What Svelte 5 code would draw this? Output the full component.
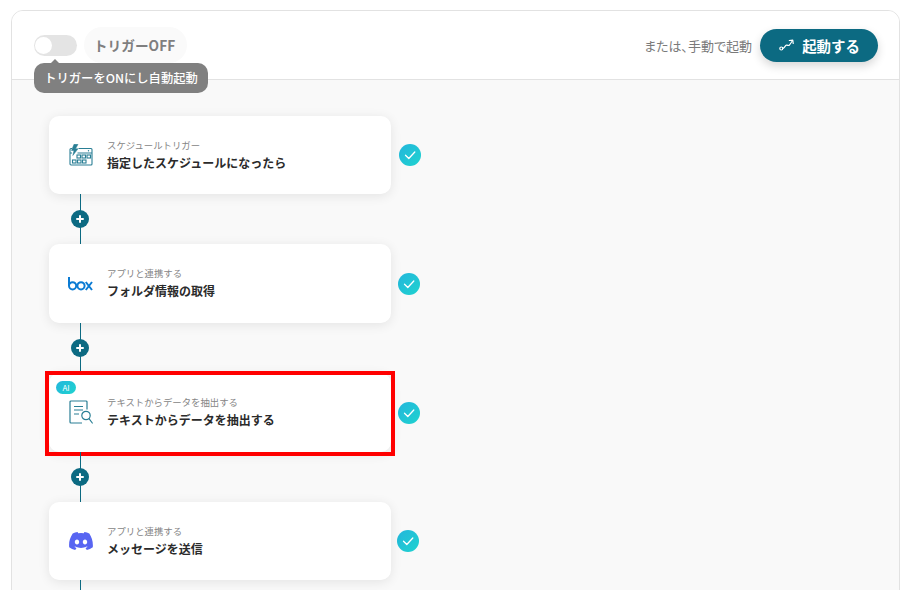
<script lang="ts">
    const steps = [
        { kind: "schedule", label: "スケジュールトリガー", title: "指定したスケジュールになったら", nudge: 8 },
        { kind: "box", label: "アプリと連携する", title: "フォルダ情報の取得", nudge: 7 },
        { kind: "ai", label: "テキストからデータを抽出する", title: "テキストからデータを抽出する", selected: true, nudge: 7 },
        { kind: "discord", label: "アプリと連携する", title: "メッセージを送信", nudge: 6 },
    ];
</script>

<svg class="defs" width="0" height="0">
    <defs>
        <linearGradient id="mint" x1="0" y1="0" x2="1" y2="1">
            <stop offset="0" stop-color="#23b6dc" />
            <stop offset="1" stop-color="#1fd3cf" />
        </linearGradient>
    </defs>
</svg>

<div class="page">
    <div class="panel">
        <header class="bar">
            <div class="switch"><span class="knob"></span></div>
            <span class="state">トリガーOFF</span>
            <span class="tip">トリガーをONにし自動起動</span>
            <span class="hint">または、手動で起動</span>
            <button class="run">
                <svg width="15" height="12" viewBox="0 0 15 12" fill="none" stroke="#fff" stroke-width="1.2" stroke-linecap="round" stroke-linejoin="round">
                    <circle cx="2.300" cy="9.500" r="1.500" />
                    <path d="M4 9.300 C6 9 5.800 6.500 7.500 6.200 C9 6 9.300 7.200 10.500 6 L13.300 2" />
                    <path d="M10.300 1.500 L13.800 1.200 L14.200 4.500" />
                </svg>
                起動する
            </button>
        </header>
        <div class="flow">
            {#each steps as step, i}
                <div class="row">
                    <div class="card" class:selected={step.selected}>
                        {#if step.selected}<span class="ai">AI</span>{/if}
                        <div class="icon">
                            {#if step.kind === "schedule"}
                                <svg width="24" height="22" viewBox="0 0 24 22" fill="none" stroke="#2a7f95" stroke-width="1.100">
                                    <path d="M9.500 4.500 H22 A1 1 0 0 1 23 5.500 V20 A1 1 0 0 1 22 21 H2 A1 1 0 0 1 1 20 V5.500 A1 1 0 0 1 2 4.500 H3" />
                                    <path d="M1 9 H3 M8.500 9 H23" />
                                    <path fill="#2a7f95" stroke="#2a7f95" stroke-width="0.500" stroke-linejoin="round" d="M5 0.300 L2.500 6.500 H5 L3.800 11.500 L9 4.800 H6.500 L9 0.300 Z" />
                                    <circle cx="19.500" cy="6.800" r="0.700" fill="#2a7f95" stroke="none" />
                                    <rect x="8" y="11" width="3.500" height="3" /><rect x="13" y="11" width="3.500" height="3" /><rect x="18" y="11" width="3.500" height="3" />
                                    <rect x="3.500" y="16" width="3.500" height="3" /><rect x="8.500" y="16" width="3.500" height="3" /><rect x="13.500" y="16" width="3.500" height="3" />
                                </svg>
                            {:else if step.kind === "box"}
                                <svg width="25" height="14" viewBox="0 0 25 14" fill="none" stroke="#0b7bd3" stroke-width="2">
                                    <path d="M1 0 V8.800" /><circle cx="4.600" cy="8.800" r="3.600" /><circle cx="13" cy="8.800" r="3.600" />
                                    <path d="M17.800 5 L24 13 M24 5 L17.800 13" />
                                </svg>
                            {:else if step.kind === "ai"}
                                <svg width="24" height="25" viewBox="0 0 24 25" fill="none" stroke="#2a7f95" stroke-width="1.200">
                                    <path d="M18 9.500 V2 A1 1 0 0 0 17 1 H2 A1 1 0 0 0 1 2 V22 A1 1 0 0 0 2 23 H13" />
                                    <path d="M5 6.500 H14 M5 10 H14 M5 14 H10" />
                                    <circle cx="17" cy="15.500" r="4.200" />
                                    <path d="M20 18.700 L23.300 23" stroke-linecap="round" />
                                </svg>
                            {:else}
                                <svg width="24" height="18" viewBox="0 0 24 18">
                                    <path fill="#5865f2" d="M20.300 1.500A19.600 19.600 0 0 0 15.400 0l-.6 1.300a18 18 0 0 0-5.600 0L8.600 0a19.600 19.600 0 0 0-4.900 1.500C.6 6.200-.3 10.700.2 15.200A19.800 19.800 0 0 0 6.200 18l1.300-2-2-1 .5-.4a14 14 0 0 0 12 0l.5.4-2 1 1.300 2a19.800 19.800 0 0 0 6-2.800c.5-5.200-.9-9.700-3.500-13.700zM8 12.400c-1.200 0-2.200-1.100-2.200-2.400S6.800 7.600 8 7.600s2.200 1.100 2.200 2.400-1 2.400-2.200 2.400zm8 0c-1.200 0-2.200-1.100-2.200-2.400s1-2.400 2.200-2.400 2.200 1.100 2.200 2.400-1 2.400-2.200 2.400z" />
                                </svg>
                            {/if}
                        </div>
                        <div class="text">
                            <span class="label">{step.label}</span>
                            <span class="title">{step.title}</span>
                        </div>
                    </div>
                    <svg class="check" style="margin-left: {step.nudge}px" width="22" height="22" viewBox="0 0 22 22">
                        <circle cx="11" cy="11" r="11" fill="url(#mint)" />
                        <path d="M6.500 11.200 L9.800 14.500 L15.800 8" fill="none" stroke="#fff" stroke-width="1.300" stroke-linecap="round" stroke-linejoin="round" />
                    </svg>
                </div>
                <div class="link">
                    <span class="plus">
                        <svg width="10" height="10" viewBox="0 0 10 10" stroke="#fff" stroke-width="2" stroke-linecap="round"><path d="M5 2 V8 M2 5 H8" /></svg>
                    </span>
                </div>
            {/each}
        </div>
    </div>
</div>

<style>
    :global(body) {
        margin: 0;
        background: #fff;
        font-family: "Noto Sans CJK JP", "Noto Sans", sans-serif;
    }

    .defs {
        position: absolute;
    }

    .page {
        width: 910px;
        height: 590px;
        box-sizing: border-box;
        padding: 10px 10px 0 11px;
        overflow: hidden;
    }

    .panel {
        height: 600px;
        border: 1px solid #e2e2e2;
        border-radius: 12px;
        background: #f9f9f9;
        overflow: hidden;
    }

    .bar {
        position: relative;
        display: flex;
        align-items: center;
        height: 69px;
        box-sizing: border-box;
        padding: 0 21px 0 22px;
        background: #fff;
        border-bottom: 1px solid #e2e2e2;
    }

    .switch {
        width: 43px;
        height: 21px;
        border-radius: 11px;
        background: #e4e4e4;
        display: flex;
        align-items: center;
        padding-left: 1px;
        box-sizing: border-box;
    }

    .knob {
        width: 17px;
        height: 17px;
        border-radius: 50%;
        background: #fff;
    }

    .state {
        margin-left: 7px;
        width: 103px;
        box-sizing: border-box;
        text-align: center;
        padding: 8px 2px 8px 0;
        border-radius: 18px;
        background: #fafafa;
        color: #7f7f7f;
        font-size: 13.700px;
        font-weight: 700;
        line-height: 20px;
    }

    .tip {
        position: absolute;
        left: 22px;
        top: 52px;
        width: 174px;
        box-sizing: border-box;
        text-align: center;
        height: 30px;
        line-height: 30px;
        border-radius: 10px;
        background: #808080;
        color: #fff;
        font-size: 12.300px;
        font-weight: 500;
    }

    .tip::before {
        content: "";
        position: absolute;
        left: 17px;
        top: -4px;
        border: 4px solid transparent;
        border-top: 0;
        border-bottom-color: #808080;
    }

    .hint {
        margin-left: auto;
        color: #7a7a7a;
        font-size: 13px;
        font-feature-settings: "palt";
    }

    .run {
        display: flex;
        align-items: center;
        justify-content: center;
        gap: 8px;
        margin-left: 8px;
        width: 118px;
        height: 33px;
        padding: 0 0 0 1px;
        border: 0;
        border-radius: 17px;
        background: #0c6a82;
        color: #fff;
        font: 700 14.400px "Noto Sans CJK JP", sans-serif;
        box-shadow: 0 4px 10px rgba(0, 0, 0, 0.16);
    }

    .flow {
        padding: 35.700px 0 0 37px;
    }

    .row {
        display: flex;
        align-items: center;
    }

    .card {
        position: relative;
        display: flex;
        align-items: center;
        gap: 13px;
        width: 342px;
        height: 78.670px;
        box-sizing: border-box;
        padding-left: 18px;
        background: #fff;
        border-radius: 10px;
        box-shadow: 0 2px 12px rgba(0, 0, 0, 0.09);
    }

    .card.selected::after {
        content: "";
        position: absolute;
        inset: -2px -4px -4px -4px;
        border: 4px solid #f00;
    }

    .icon {
        width: 27px;
        display: flex;
        justify-content: center;
    }

    .text {
        display: flex;
        flex-direction: column;
        margin-top: -0.500px;
    }

    .label {
        font-size: 9.400px;
        line-height: 14px;
        margin-bottom: 2px;
        color: #858585;
    }

    .title {
        font-size: 12px;
        font-weight: 700;
        line-height: 18px;
        color: #2b2b2b;
    }

    .ai {
        position: absolute;
        left: 7px;
        top: 8px;
        width: 20px;
        height: 13px;
        border-radius: 7px;
        background: linear-gradient(135deg, #23b6dc, #1fd3cf);
        color: #fff;
        font-size: 8px;
        line-height: 13px;
        text-align: center;
    }

    .check {
        margin-top: 0.500px;
    }

    .link {
        position: relative;
        width: 62px;
        height: 50px;
        display: flex;
        align-items: center;
        justify-content: center;
    }

    .link::before {
        content: "";
        position: absolute;
        left: 31px;
        top: 0;
        bottom: 0;
        width: 1px;
        background: #0c6a82;
    }

    .plus {
        position: relative;
        width: 18px;
        height: 18px;
        border-radius: 50%;
        background: #0c6a82;
        display: flex;
        align-items: center;
        justify-content: center;
    }
</style>
